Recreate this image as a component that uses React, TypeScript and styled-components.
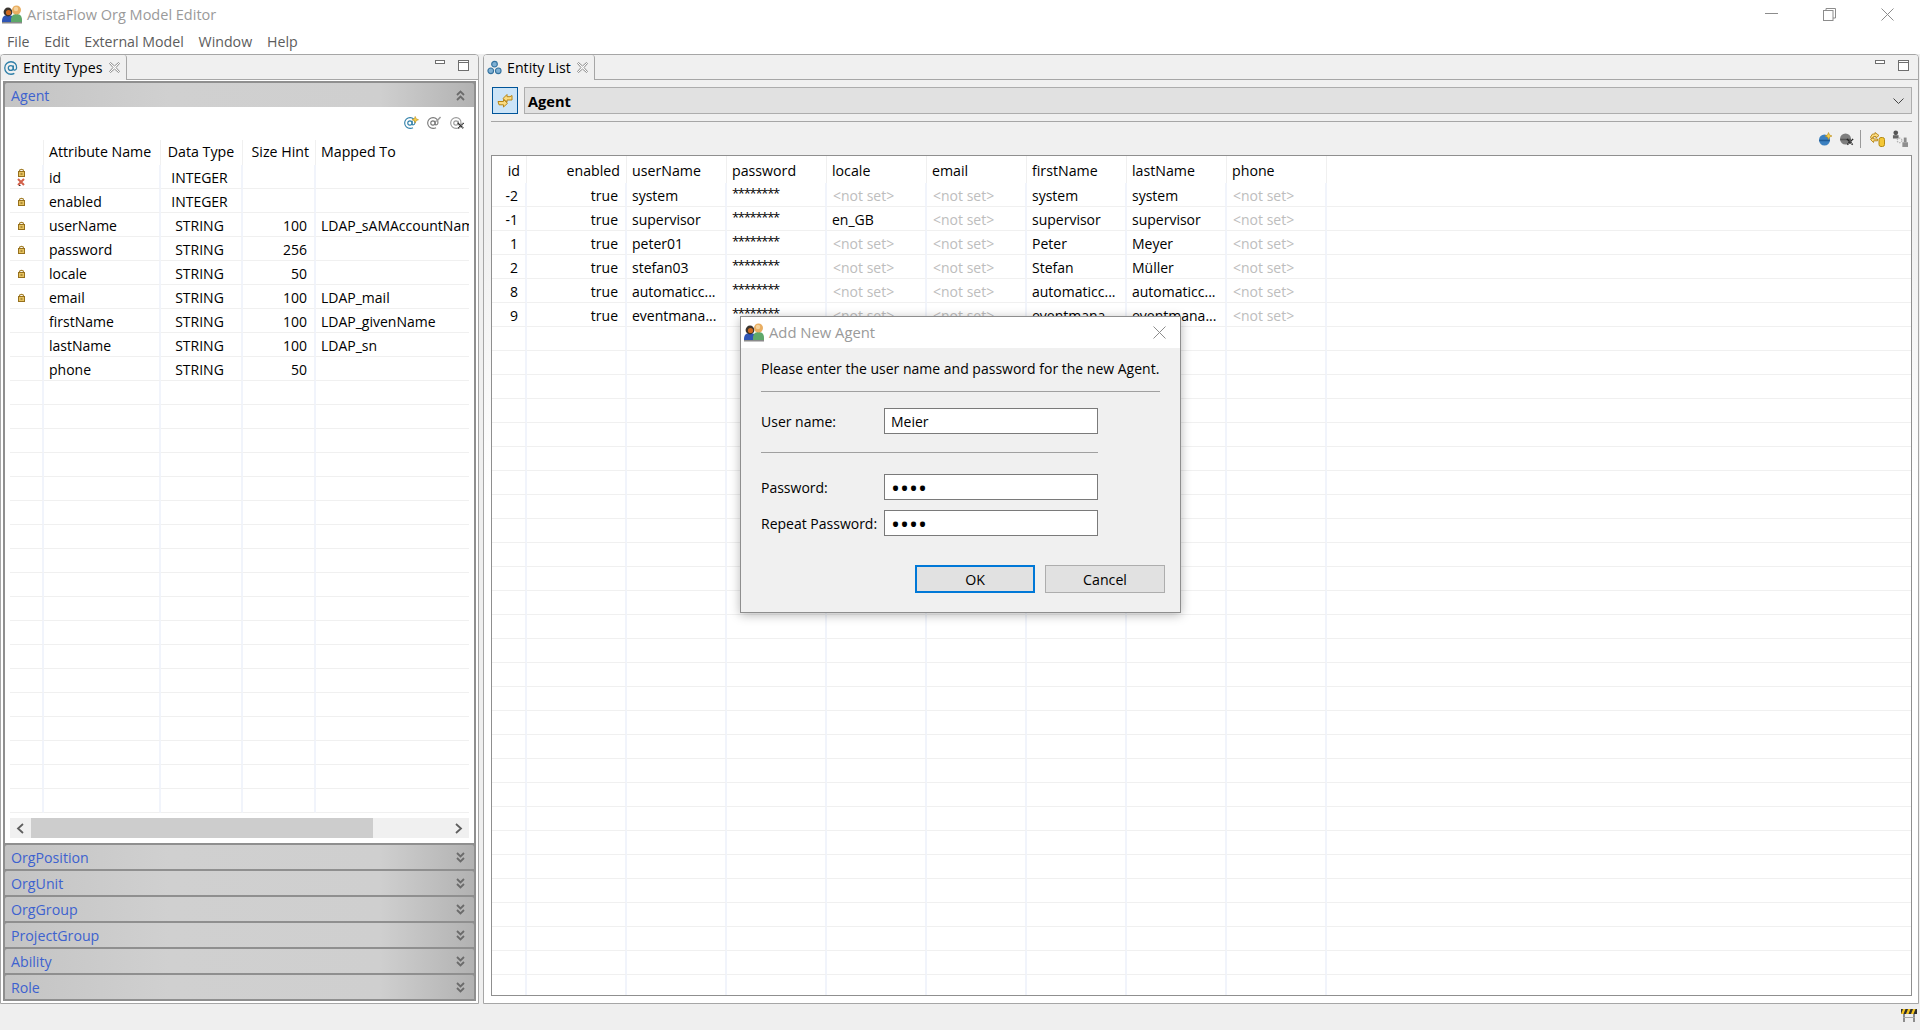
import React from "react";
import styled, { createGlobalStyle } from "styled-components";

const FONT = `"Open Sans", "Noto Sans", "Liberation Sans", sans-serif`;

const Global = createGlobalStyle`
  html, body { margin: 0; padding: 0; background: #fff; }
  body { font-family: ${FONT}; font-size: 14px; color: #000; overflow: hidden; }
  * { box-sizing: border-box; }
`;

const Page = styled.div`
  position: relative;
  width: 1920px;
  height: 1030px;
  overflow: hidden;
  background: #efefef;
  display: flex;
  flex-direction: column;
`;
const TitleBar = styled.div`
  height: 30px;
  background: #fff;
  display: flex;
  align-items: center;
  padding: 0 4px 2px 2px;
  color: #9a9a9a;
  font-size: 14.5px;
`;
const TitleText = styled.span`
  margin-left: 4px;
  flex: 1;
`;
const WinButton = styled.div`
  width: 58px;
  height: 28px;
  display: flex;
  align-items: center;
  justify-content: center;
`;
const MenuBar = styled.div`
  height: 24px;
  background: #fff;
  display: flex;
  align-items: center;
  padding: 0 0 2px 7px;
  gap: 14.8px;
  color: #5c5c5c;
  font-size: 14.2px;
`;
const Workspace = styled.div`
  height: 950px;
  display: flex;
  gap: 4px;
`;
const Pane = styled.section<{ $width: number }>`
  width: ${(p) => p.$width}px;
  height: 950px;
  border: 1px solid #a6a6a6;
  border-radius: 4px 4px 0 0;
  background: #fff;
  display: flex;
  flex-direction: column;
  overflow: hidden;
`;
const TabStrip = styled.div`
  height: 25px;
  flex: none;
  background: #f0f0f0;
  display: flex;
  align-items: stretch;
`;
const Tab = styled.div<{ $width: number }>`
  width: ${(p) => p.$width}px;
  flex: none;
  display: flex;
  align-items: center;
  gap: 5px;
  padding-left: 3px;
  background: #f0f0f0;
  border-right: 1px solid #a6a6a6;
  border-radius: 0 3px 0 0;
`;
const TabLabel = styled.span`
  font-size: 14.2px;
  flex: 1;
  white-space: nowrap;
  padding-bottom: 1px;
`;
const TabCloseSlot = styled.span`
  display: flex;
  margin-right: 6px;
`;
const StripRest = styled.div`
  flex: 1;
  border-bottom: 1px solid #a6a6a6;
  display: flex;
  justify-content: flex-end;
  align-items: flex-start;
  gap: 13px;
  padding: 5px 9px 0 0;
`;
const Stack = styled.div`
  flex: 1;
  margin: 1px 2px 2px 2px;
  border: 2px solid #8f8f8f;
  background: #8f8f8f;
  display: flex;
  flex-direction: column;
  gap: 2px;
  min-height: 0;
`;
const OpenSection = styled.div`
  flex: 1;
  min-height: 0;
  display: flex;
  flex-direction: column;
`;
const SectionHead = styled.div`
  height: 24px;
  flex: none;
  display: flex;
  align-items: center;
  justify-content: space-between;
  padding: 0 9px 0 6px;
  color: #3d62cf;
  font-size: 14.2px;
  border-radius: 2px 2px 0 0;
  background: linear-gradient(90deg, #c4c4c4 0%, #d0d0d0 35%, #cfcfcf 80%, #b2b2b2 100%);
`;
const SectionBody = styled.div`
  flex: 1;
  min-height: 0;
  background: #fff;
  display: flex;
  flex-direction: column;
  padding: 0 5px 5px 5px;
`;
const MiniToolbar = styled.div`
  height: 33px;
  flex: none;
  display: flex;
  align-items: flex-start;
  justify-content: flex-end;
  gap: 8px;
  padding: 9px 4px 0 0;
`;
const TableClip = styled.div`
  flex: 1;
  min-height: 0;
  overflow: hidden;
`;
const Grid = styled.table`
  border-collapse: separate;
  border-spacing: 0;
  table-layout: fixed;
  width: 100%;
`;
const Col = styled.col<{ $w?: number }>`
  width: ${(p) => (p.$w ? `${p.$w}px` : "auto")};
`;
const HeadCell = styled.th<{ $h: number; $raised?: boolean; $align?: string; $last?: boolean }>`
  height: ${(p) => p.$h}px;
  padding: ${(p) => (p.$raised ? "0 6px 2px 5px" : "1px 6px 0 5px")};
  font-weight: 400;
  font-size: 14.2px;
  text-align: ${(p) => p.$align || "left"};
  white-space: nowrap;
  overflow: hidden;
  background: #fff;
  border-right: ${(p) => (p.$last ? "0" : "1px solid #f0f0f0")};
`;
const Cell = styled.td<{ $align?: string; $muted?: boolean; $plain?: boolean }>`
  height: 24px;
  padding: ${(p) =>
    p.$align === "right" ? "1px 7px 0 0" : p.$align === "center" ? "1px 3px 0 0" : "1px 0 0 5px"};
  font-size: 14px;
  text-align: ${(p) => p.$align || "left"};
  white-space: nowrap;
  overflow: hidden;
  color: ${(p) => (p.$muted ? "#bdbdbd" : "#000")};
  border-bottom: 1px solid #f0f0f0;
  border-right: ${(p) => (p.$plain ? "0" : "2px solid #f1f4fb")};
`;
const LockWrap = styled.div`
  display: flex;
  flex-direction: column;
  align-items: center;
  padding-right: 7px;
  gap: 1px;
`;
const Secret = styled.span`
  display: block;
  font-size: 13px;
  letter-spacing: -1.3px;
  margin-top: -5px;
`;
const NotSet = styled.span`
  padding-left: 1px;
`;
const Scrollbar = styled.div`
  height: 20px;
  margin-top: 2px;
  flex: none;
  background: #f0f0f0;
  display: flex;
  align-items: center;
  justify-content: space-between;
  padding: 0 6px;
  position: relative;
`;
const ScrollThumb = styled.div`
  position: absolute;
  left: 21px;
  top: 0;
  bottom: 0;
  width: 342px;
  background: #cdcdcd;
`;
const FormBody = styled.div`
  flex: 1;
  min-height: 0;
  display: flex;
  flex-direction: column;
  padding: 7px 6px 7px 7px;
  background: linear-gradient(180deg, #f0f0f0 0, #f0f0f0 150px, #fff 420px);
`;
const ComboRow = styled.div`
  display: flex;
  gap: 6px;
  height: 27px;
  flex: none;
  padding-left: 1px;
`;
const ToggleButton = styled.div`
  width: 26px;
  height: 27px;
  background: #cce4f7;
  border: 1px solid #005499;
  display: flex;
  align-items: center;
  justify-content: center;
`;
const Combo = styled.div`
  flex: 1;
  height: 27px;
  background: #e1e1e1;
  border: 1px solid #adadad;
  display: flex;
  align-items: center;
  justify-content: space-between;
  padding: 1px 7px 0 3px;
  font-weight: 700;
  font-size: 14.6px;
`;
const Rule = styled.div`
  height: 1px;
  background: #a6a6a6;
  margin-top: 7px;
  flex: none;
`;
const ListToolbar = styled.div`
  height: 33px;
  flex: none;
  display: flex;
  align-items: center;
  justify-content: flex-end;
  padding: 0 4px 0 0;
  gap: 7px;
`;
const ToolDivider = styled.div`
  width: 1px;
  height: 18px;
  background: #9a9a9a;
  margin: 0 2px 0 -1px;
`;
const ListFrame = styled.div`
  flex: 1;
  min-height: 0;
  border: 1px solid #8f8f8f;
  background: #fff;
  overflow: hidden;
`;
const StatusBar = styled.div`
  flex: 1;
  display: flex;
  justify-content: flex-end;
  padding: 5px 3px 0 0;
`;

const Dialog = styled.div`
  position: absolute;
  left: 740px;
  top: 316px;
  width: 441px;
  height: 297px;
  background: #f0f0f0;
  border: 1px solid #8e8e8e;
  box-shadow: 0 2px 10px rgba(0, 0, 0, 0.28);
  display: flex;
  flex-direction: column;
`;
const DialogTitle = styled.div`
  height: 31px;
  flex: none;
  background: #fff;
  display: flex;
  align-items: center;
  padding: 0 14px 1px 3px;
  gap: 4px;
  font-size: 14.8px;
  color: #9a9a9a;
`;
const DialogTitleText = styled.span`
  flex: 1;
`;
const DialogBody = styled.div`
  flex: 1;
  padding: 10px 15px 0 20px;
  display: flex;
  flex-direction: column;
`;
const Message = styled.div`
  height: 22px;
  line-height: 22px;
  font-size: 14px;
  white-space: nowrap;
`;
const DialogRule = styled.div<{ $width: number; $top: number }>`
  width: ${(p) => p.$width}px;
  height: 1px;
  background: #a0a0a0;
  margin-top: ${(p) => p.$top}px;
`;
const FieldRow = styled.div<{ $top: number }>`
  display: flex;
  align-items: center;
  height: 26px;
  margin-top: ${(p) => p.$top}px;
`;
const FieldLabel = styled.label`
  width: 123px;
  flex: none;
  font-size: 14px;
  padding-top: 1px;
  white-space: nowrap;
`;
const FieldInput = styled.input<{ $secret?: boolean }>`
  width: 214px;
  height: 26px;
  border: 1px solid #7a7a7a;
  background: #fff;
  padding: ${(p) => (p.$secret ? "1px 6px 0" : "1px 6px 0")};
  margin: 0;
  outline: none;
  border-radius: 0;
  font-family: ${FONT};
  font-size: ${(p) => (p.$secret ? "24px" : "14px")};
  color: #000;
`;
const ButtonRow = styled.div`
  display: flex;
  justify-content: flex-end;
  gap: 10px;
  margin-top: 29px;
`;
const DialogButton = styled.button<{ $primary?: boolean }>`
  width: 120px;
  height: 28px;
  padding: 1px 0 0;
  background: #e1e1e1;
  border: ${(p) => (p.$primary ? "2px solid #0078d7" : "1px solid #adadad")};
  font-family: ${FONT};
  font-size: 14.2px;
  color: #000;
`;

/* ---------- drawings ---------- */
const PeopleIcon = () => (
  <svg width="21" height="20" viewBox="0 0 21 20">
    <path d="M0 17c0-4 2-6 6-6s6 2 6 6v1H0z" fill="#2f55b5" />
    <circle cx="6" cy="8" r="4.4" fill="#3a3530" />
    <circle cx="6.5" cy="8.5" r="2.6" fill="#d0691f" />
    <path d="M9 16c0-4 2-6 5.500-6s5.500 2 5.500 6v2H9z" fill="#5ea86a" />
    <circle cx="14.500" cy="6" r="4.500" fill="#e9ae62" />
    <circle cx="14" cy="5" r="2.200" fill="#f6d39c" />
    <rect x="0" y="18" width="20" height="1.500" fill="#8a8a8a" />
  </svg>
);
const WinMin = () => (
  <svg width="13" height="2" viewBox="0 0 13 2"><rect width="13" height="1" fill="#8c8c8c" /></svg>
);
const WinRestore = () => (
  <svg width="13" height="13" viewBox="0 0 13 13" fill="none" stroke="#8c8c8c">
    <rect x="0.500" y="2.500" width="9.500" height="10" />
    <path d="M3 2.500V.500h9.500V10H10" />
  </svg>
);
const CrossThin = ({ size = 13 }: { size?: number }) => (
  <svg width={size} height={size} viewBox="0 0 13 13" fill="none" stroke="#8c8c8c">
    <path d="M.500.500l12 12M12.500.500l-12 12" />
  </svg>
);
const AtIconInner = ({ color }: { color: string }) => (
  <g fill="none" stroke={color} strokeWidth="1.200">
    <circle cx="6.300" cy="6.500" r="2.300" />
    <path d="M8.700 4.200v3.300c0 1.400 2.800 1.400 3-1C12 3 9.700.700 6.500.700S.700 3.200.700 6.500s2.600 5.800 5.800 5.800c1.300 0 2.300-.3 3.100-.8" />
  </g>
);
const AtTab = () => (
  <svg width="14" height="14" viewBox="0 0 13 13"><AtIconInner color="#2f7fa8" /></svg>
);
const TabCross = () => (
  <svg width="11" height="11" viewBox="0 0 11 11" fill="#fff" stroke="#8a8a8a">
    <path d="M1.500.500L5.500 4l4-3.500 1 1L7 5.500l3.500 4-1 1-4-3.500-4 3.500-1-1L4 5.500.500 1.500z" />
  </svg>
);
const EntitiesIcon = () => (
  <svg width="15" height="15" viewBox="0 0 16 15" fill="#7fb0d4" stroke="#33729f" strokeWidth="1.200">
    <circle cx="8" cy="4" r="3" />
    <circle cx="4" cy="11" r="3" />
    <circle cx="12" cy="11" r="3" />
  </svg>
);
const MinGlyph = () => (
  <svg width="10" height="5" viewBox="0 0 10 5"><rect x=".5" y=".5" width="9" height="3" fill="#fff" stroke="#6e6e6e" /></svg>
);
const MaxGlyph = () => (
  <svg width="11" height="11" viewBox="0 0 11 11" fill="#fff" stroke="#6e6e6e">
    <rect x=".5" y=".5" width="10" height="10" />
    <path d="M.5 2.500h10" />
  </svg>
);
const Chevrons = ({ up }: { up?: boolean }) => (
  <svg width="9" height="11" viewBox="0 0 9 11" fill="none" stroke="#6b6b6b" strokeWidth="1.800">
    {up ? <path d="M1 5l3.500-3.500L8 5M1 10l3.500-3.500L8 10" /> : <path d="M1 1l3.500 3.500L8 1M1 6l3.500 3.500L8 6" />}
  </svg>
);
const Spark = ({ x, y }: { x: number; y: number }) => (
  <path d={`M${x} ${y - 3.500}l1 2.500 2.500 1-2.500 1-1 2.500-1-2.500-2.500-1 2.500-1z`} fill="#f6cf4a" stroke="#b98a16" strokeWidth=".6" />
);
const BlackX = ({ x, y }: { x: number; y: number }) => (
  <path d={`M${x} ${y}l6 6m0-6l-6 6`} stroke="#222" strokeWidth="1.700" strokeDasharray="1.200 .5" fill="none" />
);
const AtNew = () => (
  <svg width="15" height="14" viewBox="0 0 16 15">
    <g transform="translate(0 1)"><AtIconInner color="#2f7fa8" /></g>
    <Spark x={12} y={4} />
  </svg>
);
const AtEdit = () => (
  <svg width="15" height="14" viewBox="0 0 16 15">
    <g transform="translate(0 1)"><AtIconInner color="#777" /></g>
    <path d="M10 6l4.500-5" stroke="#9a9a9a" strokeWidth="1.600" fill="none" />
  </svg>
);
const AtDelete = () => (
  <svg width="15" height="14" viewBox="0 0 16 15">
    <g transform="translate(0 1)"><AtIconInner color="#9a9a9a" /></g>
    <BlackX x={8.500} y={7.500} />
  </svg>
);
const Lock = () => (
  <svg width="7" height="9" viewBox="0 0 7 9">
    <path d="M1.500 4V2.500C1.500 1 5.500 1 5.500 2.500V4" fill="none" stroke="#a5822f" strokeWidth="1.100" />
    <rect x=".5" y="3.500" width="6" height="5" fill="#e6c25f" stroke="#96701d" />
    <rect x="2.500" y="5.500" width="2" height="1" fill="#7a5a14" />
  </svg>
);
const RedX = () => (
  <svg width="8" height="8" viewBox="0 0 8 8">
    <path d="M1 1l6 6M7 1L1 7" stroke="#d2604a" strokeWidth="2" />
    <path d="M2 7.500h1.500" stroke="#333" strokeWidth="1" />
  </svg>
);
const ArrowLeft = () => (
  <svg width="9" height="11" viewBox="0 0 9 11" fill="none" stroke="#5e5e5e" strokeWidth="1.800"><path d="M7 1L2 5.500 7 10" /></svg>
);
const ArrowRight = () => (
  <svg width="9" height="11" viewBox="0 0 9 11" fill="none" stroke="#5e5e5e" strokeWidth="1.800"><path d="M2 1l5 4.500L2 10" /></svg>
);
const SwapArrows = () => (
  <svg width="16" height="16" viewBox="0 0 16 16" fill="#fbdc80" stroke="#b68518" strokeWidth="1">
    <path d="M15 2.500v4.500h-5v2.200L6 5.500l4-4v2.200h3z" />
    <path d="M1 8.500h5.500V6.500l4 3.800-4 3.700v-2.200H2z" />
  </svg>
);
const Ball = ({ color, line }: { color: string; line: string }) => (
  <>
    <circle cx="6.500" cy="8" r="5.500" fill={color} />
    <path d="M1.200 8.500h10.600" stroke={line} strokeWidth="1.500" />
  </>
);
const BallNew = () => (
  <svg width="14" height="14" viewBox="0 0 14 14">
    <Ball color="#3b80c0" line="#1f5a95" />
    <Spark x={10.500} y={4} />
  </svg>
);
const BallDelete = () => (
  <svg width="15" height="15" viewBox="0 0 15 15">
    <Ball color="#7e7e7e" line="#555" />
    <BlackX x={8} y={8} />
  </svg>
);
const SwapDb = () => (
  <svg width="15" height="16" viewBox="0 0 15 16">
    <g fill="#fbdc80" stroke="#b68518" strokeWidth=".9">
      <path d="M5 1.500l4 3-3 2.500V5.500H3.500L1.500 8 .5 6l2-3H5z" />
      <path d="M.5 8.500l3 3 .2-1.700h3.800V8H3.700V6.500z" />
    </g>
    <rect x="9" y="6.500" width="5.500" height="9" rx="2" fill="#f4c736" stroke="#b38a16" />
  </svg>
);
const Figures = () => (
  <svg width="16" height="17" viewBox="0 0 17 18">
    <circle cx="4" cy="3" r="2.500" fill="#555" />
    <rect x="1" y="5.500" width="6" height="3.500" fill="#666" />
    <circle cx="8" cy="11" r="2.500" fill="none" stroke="#b5b5b5" strokeWidth="1.300" strokeDasharray="1.500 1" />
    <rect x="12.500" y="8" width="3" height="5" fill="#8b8b8b" />
    <rect x="11" y="13" width="6" height="5" fill="#8f8f8f" />
  </svg>
);
const ChevronDown = () => (
  <svg width="11" height="6" viewBox="0 0 11 6" fill="none" stroke="#444"><path d="M.5.500l5 5 5-5" /></svg>
);
const Barrier = () => (
  <svg width="16" height="13" viewBox="0 0 16 13">
    <rect x="2" y="4" width="2" height="9" fill="#8d8d8d" />
    <rect x="12" y="4" width="2" height="9" fill="#8d8d8d" />
    <rect x="2" y="8" width="12" height="1" fill="#a5a5a5" />
    <rect y="0" width="16" height="5" fill="#2f2f2f" />
    <path d="M2 0h2.500L2.500 5H0zM7 0h2.500l-2 5H5zM12 0h2.500l-2 5H10z" fill="#f2c21f" />
  </svg>
);

/* ---------- data ---------- */
type Attr = { name: string; type: string; hint: string; map: string; lock: 0 | 1 | 2 };
const attributes: Attr[] = [
  { name: "id", type: "INTEGER", hint: "", map: "", lock: 2 },
  { name: "enabled", type: "INTEGER", hint: "", map: "", lock: 1 },
  { name: "userName", type: "STRING", hint: "100", map: "LDAP_sAMAccountName", lock: 1 },
  { name: "password", type: "STRING", hint: "256", map: "", lock: 1 },
  { name: "locale", type: "STRING", hint: "50", map: "", lock: 1 },
  { name: "email", type: "STRING", hint: "100", map: "LDAP_mail", lock: 1 },
  { name: "firstName", type: "STRING", hint: "100", map: "LDAP_givenName", lock: 0 },
  { name: "lastName", type: "STRING", hint: "100", map: "LDAP_sn", lock: 0 },
  { name: "phone", type: "STRING", hint: "50", map: "", lock: 0 },
];
const attrCols = [34, 117, 82, 73, 153];
const ATTR_FILLERS = Array.from({ length: 18 }, (_, i) => i);

const agentCols = ["id", "enabled", "userName", "password", "locale", "email", "firstName", "lastName", "phone"];
const agentWidths = [35, 100, 100, 100, 100, 100, 100, 100, 100];
const NS = "<not set>";
const agents = [
  ["-2", "true", "system", "", NS, NS, "system", "system", NS],
  ["-1", "true", "supervisor", "", "en_GB", NS, "supervisor", "supervisor", NS],
  ["1", "true", "peter01", "", NS, NS, "Peter", "Meyer", NS],
  ["2", "true", "stefan03", "", NS, NS, "Stefan", "Müller", NS],
  ["8", "true", "automaticc...", "", NS, NS, "automaticc...", "automaticc...", NS],
  ["9", "true", "eventmana...", "", NS, NS, "eventmana...", "eventmana...", NS],
];
const AGENT_FILLERS = Array.from({ length: 28 }, (_, i) => i);
const collapsed = ["OrgPosition", "OrgUnit", "OrgGroup", "ProjectGroup", "Ability", "Role"];

const PaneTools = () => (
  <StripRest>
    <MinGlyph />
    <MaxGlyph />
  </StripRest>
);

export default function App() {
  return (
    <Page>
      <Global />
      <TitleBar>
        <PeopleIcon />
        <TitleText>AristaFlow Org Model Editor</TitleText>
        <WinButton><WinMin /></WinButton>
        <WinButton><WinRestore /></WinButton>
        <WinButton><CrossThin /></WinButton>
      </TitleBar>
      <MenuBar>
        {["File", "Edit", "External Model", "Window", "Help"].map((m) => (
          <span key={m}>{m}</span>
        ))}
      </MenuBar>
      <Workspace>
        <Pane $width={479}>
          <TabStrip>
            <Tab $width={126}>
              <AtTab />
              <TabLabel>Entity Types</TabLabel>
              <TabCloseSlot><TabCross /></TabCloseSlot>
            </Tab>
            <PaneTools />
          </TabStrip>
          <Stack>
            <OpenSection>
              <SectionHead>
                <span>Agent</span>
                <Chevrons up />
              </SectionHead>
              <SectionBody>
                <MiniToolbar>
                  <AtNew />
                  <AtEdit />
                  <AtDelete />
                </MiniToolbar>
                <TableClip>
                  <Grid>
                    <colgroup>
                      {attrCols.map((w, i) => <Col key={i} $w={w} />)}
                    </colgroup>
                    <thead>
                      <tr>
                        <HeadCell $h={25} $raised />
                        <HeadCell $h={25} $raised>Attribute Name</HeadCell>
                        <HeadCell $h={25} $raised $align="center">Data Type</HeadCell>
                        <HeadCell $h={25} $raised $align="right">Size Hint</HeadCell>
                        <HeadCell $h={25} $raised $last>Mapped To</HeadCell>
                      </tr>
                    </thead>
                    <tbody>
                      {attributes.map((a) => (
                        <tr key={a.name}>
                          <Cell $align="center">
                            {a.lock > 0 && (
                              <LockWrap>
                                <Lock />
                                {a.lock === 2 && <RedX />}
                              </LockWrap>
                            )}
                          </Cell>
                          <Cell>{a.name}</Cell>
                          <Cell $align="center">{a.type}</Cell>
                          <Cell $align="right">{a.hint}</Cell>
                          <Cell $plain>{a.map}</Cell>
                        </tr>
                      ))}
                      {ATTR_FILLERS.map((i) => (
                        <tr key={i}>
                          <Cell /><Cell /><Cell /><Cell /><Cell $plain />
                        </tr>
                      ))}
                    </tbody>
                  </Grid>
                </TableClip>
                <Scrollbar>
                  <ScrollThumb />
                  <ArrowLeft />
                  <ArrowRight />
                </Scrollbar>
              </SectionBody>
            </OpenSection>
            {collapsed.map((c) => (
              <SectionHead key={c}>
                <span>{c}</span>
                <Chevrons />
              </SectionHead>
            ))}
          </Stack>
        </Pane>
        <Pane $width={1436}>
          <TabStrip>
            <Tab $width={111}>
              <EntitiesIcon />
              <TabLabel>Entity List</TabLabel>
              <TabCloseSlot><TabCross /></TabCloseSlot>
            </Tab>
            <PaneTools />
          </TabStrip>
          <FormBody>
            <ComboRow>
              <ToggleButton><SwapArrows /></ToggleButton>
              <Combo>
                <span>Agent</span>
                <ChevronDown />
              </Combo>
            </ComboRow>
            <Rule />
            <ListToolbar>
              <BallNew />
              <BallDelete />
              <ToolDivider />
              <SwapDb />
              <Figures />
            </ListToolbar>
            <ListFrame>
              <Grid>
                <colgroup>
                  {agentWidths.map((w, i) => <Col key={i} $w={w} />)}
                  <Col />
                </colgroup>
                <thead>
                  <tr>
                    {agentCols.map((c, i) => (
                      <HeadCell key={c} $h={27} $align={i < 2 ? "right" : "left"}>{c}</HeadCell>
                    ))}
                    <HeadCell $h={27} $last />
                  </tr>
                </thead>
                <tbody>
                  {agents.map((row) => (
                    <tr key={row[0]}>
                      {row.map((v, i) =>
                        i === 3 ? (
                          <Cell key={i}><Secret>********</Secret></Cell>
                        ) : v === NS ? (
                          <Cell key={i} $muted><NotSet>{v}</NotSet></Cell>
                        ) : (
                          <Cell key={i} $align={i < 2 ? "right" : undefined}>{v}</Cell>
                        )
                      )}
                      <Cell $plain />
                    </tr>
                  ))}
                  {AGENT_FILLERS.map((i) => (
                    <tr key={i}>
                      {agentCols.map((c) => <Cell key={c} />)}
                      <Cell $plain />
                    </tr>
                  ))}
                </tbody>
              </Grid>
            </ListFrame>
          </FormBody>
        </Pane>
      </Workspace>
      <StatusBar><Barrier /></StatusBar>

      <Dialog>
        <DialogTitle>
          <PeopleIcon />
          <DialogTitleText>Add New Agent</DialogTitleText>
          <CrossThin />
        </DialogTitle>
        <DialogBody>
          <Message>Please enter the user name and password for the new Agent.</Message>
          <DialogRule $width={399} $top={11} />
          <FieldRow $top={16}>
            <FieldLabel>User name:</FieldLabel>
            <FieldInput readOnly value="Meier" />
          </FieldRow>
          <DialogRule $width={337} $top={18} />
          <FieldRow $top={21}>
            <FieldLabel>Password:</FieldLabel>
            <FieldInput $secret readOnly type="password" value="1234" />
          </FieldRow>
          <FieldRow $top={10}>
            <FieldLabel>Repeat Password:</FieldLabel>
            <FieldInput $secret readOnly type="password" value="1234" />
          </FieldRow>
          <ButtonRow>
            <DialogButton $primary>OK</DialogButton>
            <DialogButton>Cancel</DialogButton>
          </ButtonRow>
        </DialogBody>
      </Dialog>
    </Page>
  );
}
